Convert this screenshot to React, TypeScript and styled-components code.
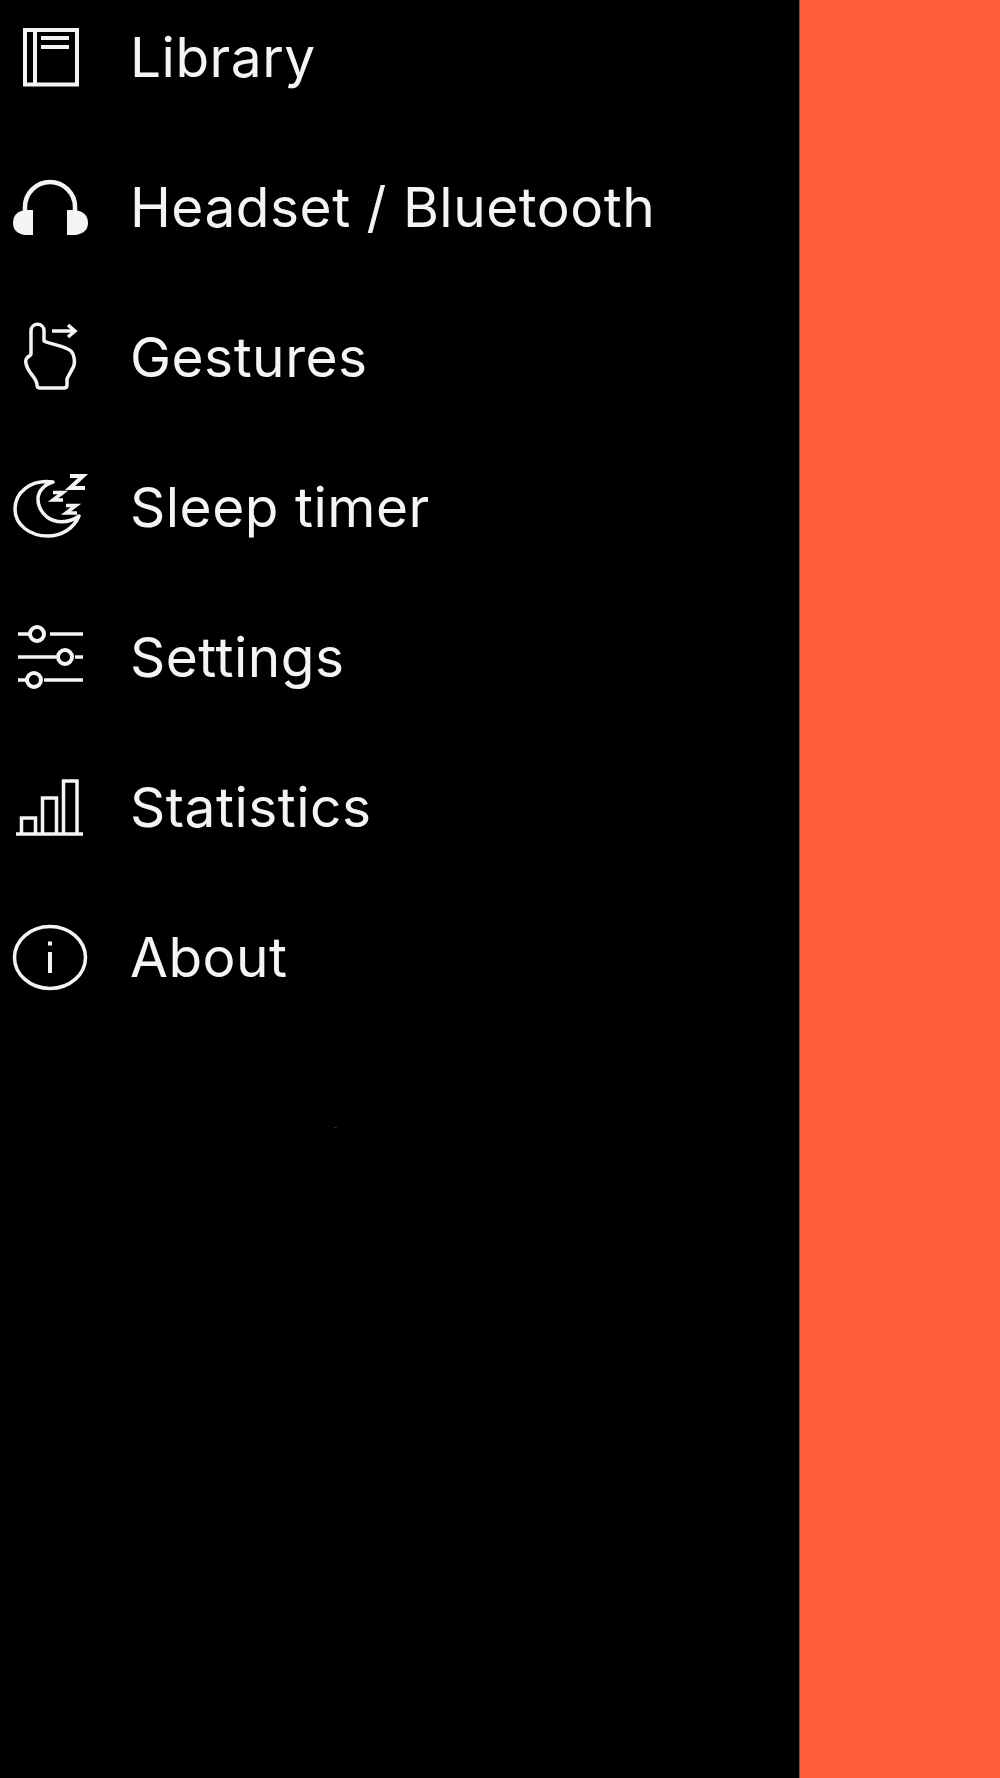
import React from "react";
import styled, { createGlobalStyle } from "styled-components";

const Global = createGlobalStyle`
  html, body { margin: 0; padding: 0; background: #000; }
`;

const Page = styled.div`
  position: relative;
  display: flex;
  width: 1000px;
  height: 1778px;
  overflow: hidden;
`;

const Drawer = styled.nav`
  width: 799px;
  height: 100%;
  flex: none;
  background: #000;
  display: flex;
  flex-direction: column;
  gap: 36px;
`;

const Scrim = styled.div`
  flex: 1;
  background: #ff5c39;
  border-left: 1px solid #a83d26;
`;

const Speck = styled.div`
  position: absolute;
  left: 334px;
  top: 1127px;
  width: 3px;
  height: 1px;
  background: #2a2a2a;
`;

const Row = styled.div`
  display: flex;
  align-items: center;
  height: 114px;
  flex: none;
`;

const IconBox = styled.svg`
  width: 100px;
  height: 100px;
  flex: none;
  color: #f4f4f4;
  filter: blur(0.7px);
`;

const Label = styled.span`
  margin-left: 30px;
  padding-top: 1px;
  font-family: Inter, "Liberation Sans", sans-serif;
  font-size: 55px;
  font-weight: 420;
  letter-spacing: 0.5px;
  color: #f4f4f4;
  line-height: 1;
  white-space: nowrap;
  filter: blur(0.5px);
`;

const Icon: React.FC<{ sw?: number; children: React.ReactNode }> = ({ sw = 3, children }) => (
  <IconBox viewBox="0 0 100 100" fill="none" stroke="currentColor" strokeWidth={sw}>
    {children}
  </IconBox>
);

const items: { label: string; icon: React.ReactNode }[] = [
  {
    label: "Library",
    icon: (
      <Icon sw={4}>
        <rect x="25" y="23" width="52" height="54.5" />
        <path d="M35 23V77.5" />
        <path d="M41 31H69M41 40H69" />
      </Icon>
    ),
  },
  {
    label: "Headset / Bluetooth",
    icon: (
      <Icon sw={4.5}>
        <path d="M25 54V50A25 25 0 0 1 75 50V54" />
        <path d="M33 53H25Q13 55 13 66Q13 76 25 78H33Z" fill="currentColor" stroke="none" />
        <path d="M67 53H75Q88 55 88 66Q88 76 75 78H67Z" fill="currentColor" stroke="none" />
      </Icon>
    ),
  },
  {
    label: "Gestures",
    icon: (
      <Icon sw={3.5}>
        <path
          d="M31 47V24C31 15 44 15 44 24V34C52 38 64 38 71 44C74 47 75 54 74 58C73 62 69 67 67 72V78C67 80 66 81 64 81H40C38 81 37 80 37 78C37 72 31 68 28 62C26 58 25 53 27 51C28 49 31 49 31 47Z"
          strokeLinejoin="round"
        />
        <path d="M52 24H74M68 18L75 24L68 30" />
      </Icon>
    ),
  },
  {
    label: "Sleep timer",
    icon: (
      <Icon sw={3.5}>
        <path
          d="M53 25C30 22 15 36 15 52C15 68 30 79 48 79C62 79 74 71 79 59C68 67 55 66 47 60C40 54 38 47 38 42C38 34 45 27 53 25Z"
          strokeLinejoin="round"
        />
        <path d="M70 19H83L70 31H85" strokeWidth={4} />
        <path d="M53 35.5H63L53 43H63" />
        <path d="M66 48.5H76L66 56H77" />
      </Icon>
    ),
  },
  {
    label: "Settings",
    icon: (
      <Icon sw={3.5}>
        <path d="M18 27H29M50 27H83" />
        <circle cx="37" cy="27" r="7" strokeWidth={4} />
        <path d="M18 50H56M75 50H83" />
        <circle cx="65" cy="50" r="7" strokeWidth={4} />
        <path d="M18 73H26M44 73H83" />
        <circle cx="34" cy="73" r="7" strokeWidth={4} />
      </Icon>
    ),
  },
  {
    label: "Statistics",
    icon: (
      <Icon sw={3.5}>
        <path d="M16 77H83" />
        <path d="M21.5 77V61H35.5V77" />
        <path d="M42.5 77V41H56.5V77" />
        <path d="M63.5 77V24H77V77" />
      </Icon>
    ),
  },
  {
    label: "About",
    icon: (
      <Icon sw={3.5}>
        <ellipse cx="50" cy="50.5" rx="35.5" ry="31" />
        <path d="M50 45V66M50 34.5V38.5" strokeWidth={4} />
      </Icon>
    ),
  },
];

export default function App() {
  return (
    <Page>
      <Global />
      <Drawer>
        {items.map((it) => (
          <Row key={it.label}>
            {it.icon}
            <Label>{it.label}</Label>
          </Row>
        ))}
      </Drawer>
      <Scrim />
      <Speck />
    </Page>
  );
}
